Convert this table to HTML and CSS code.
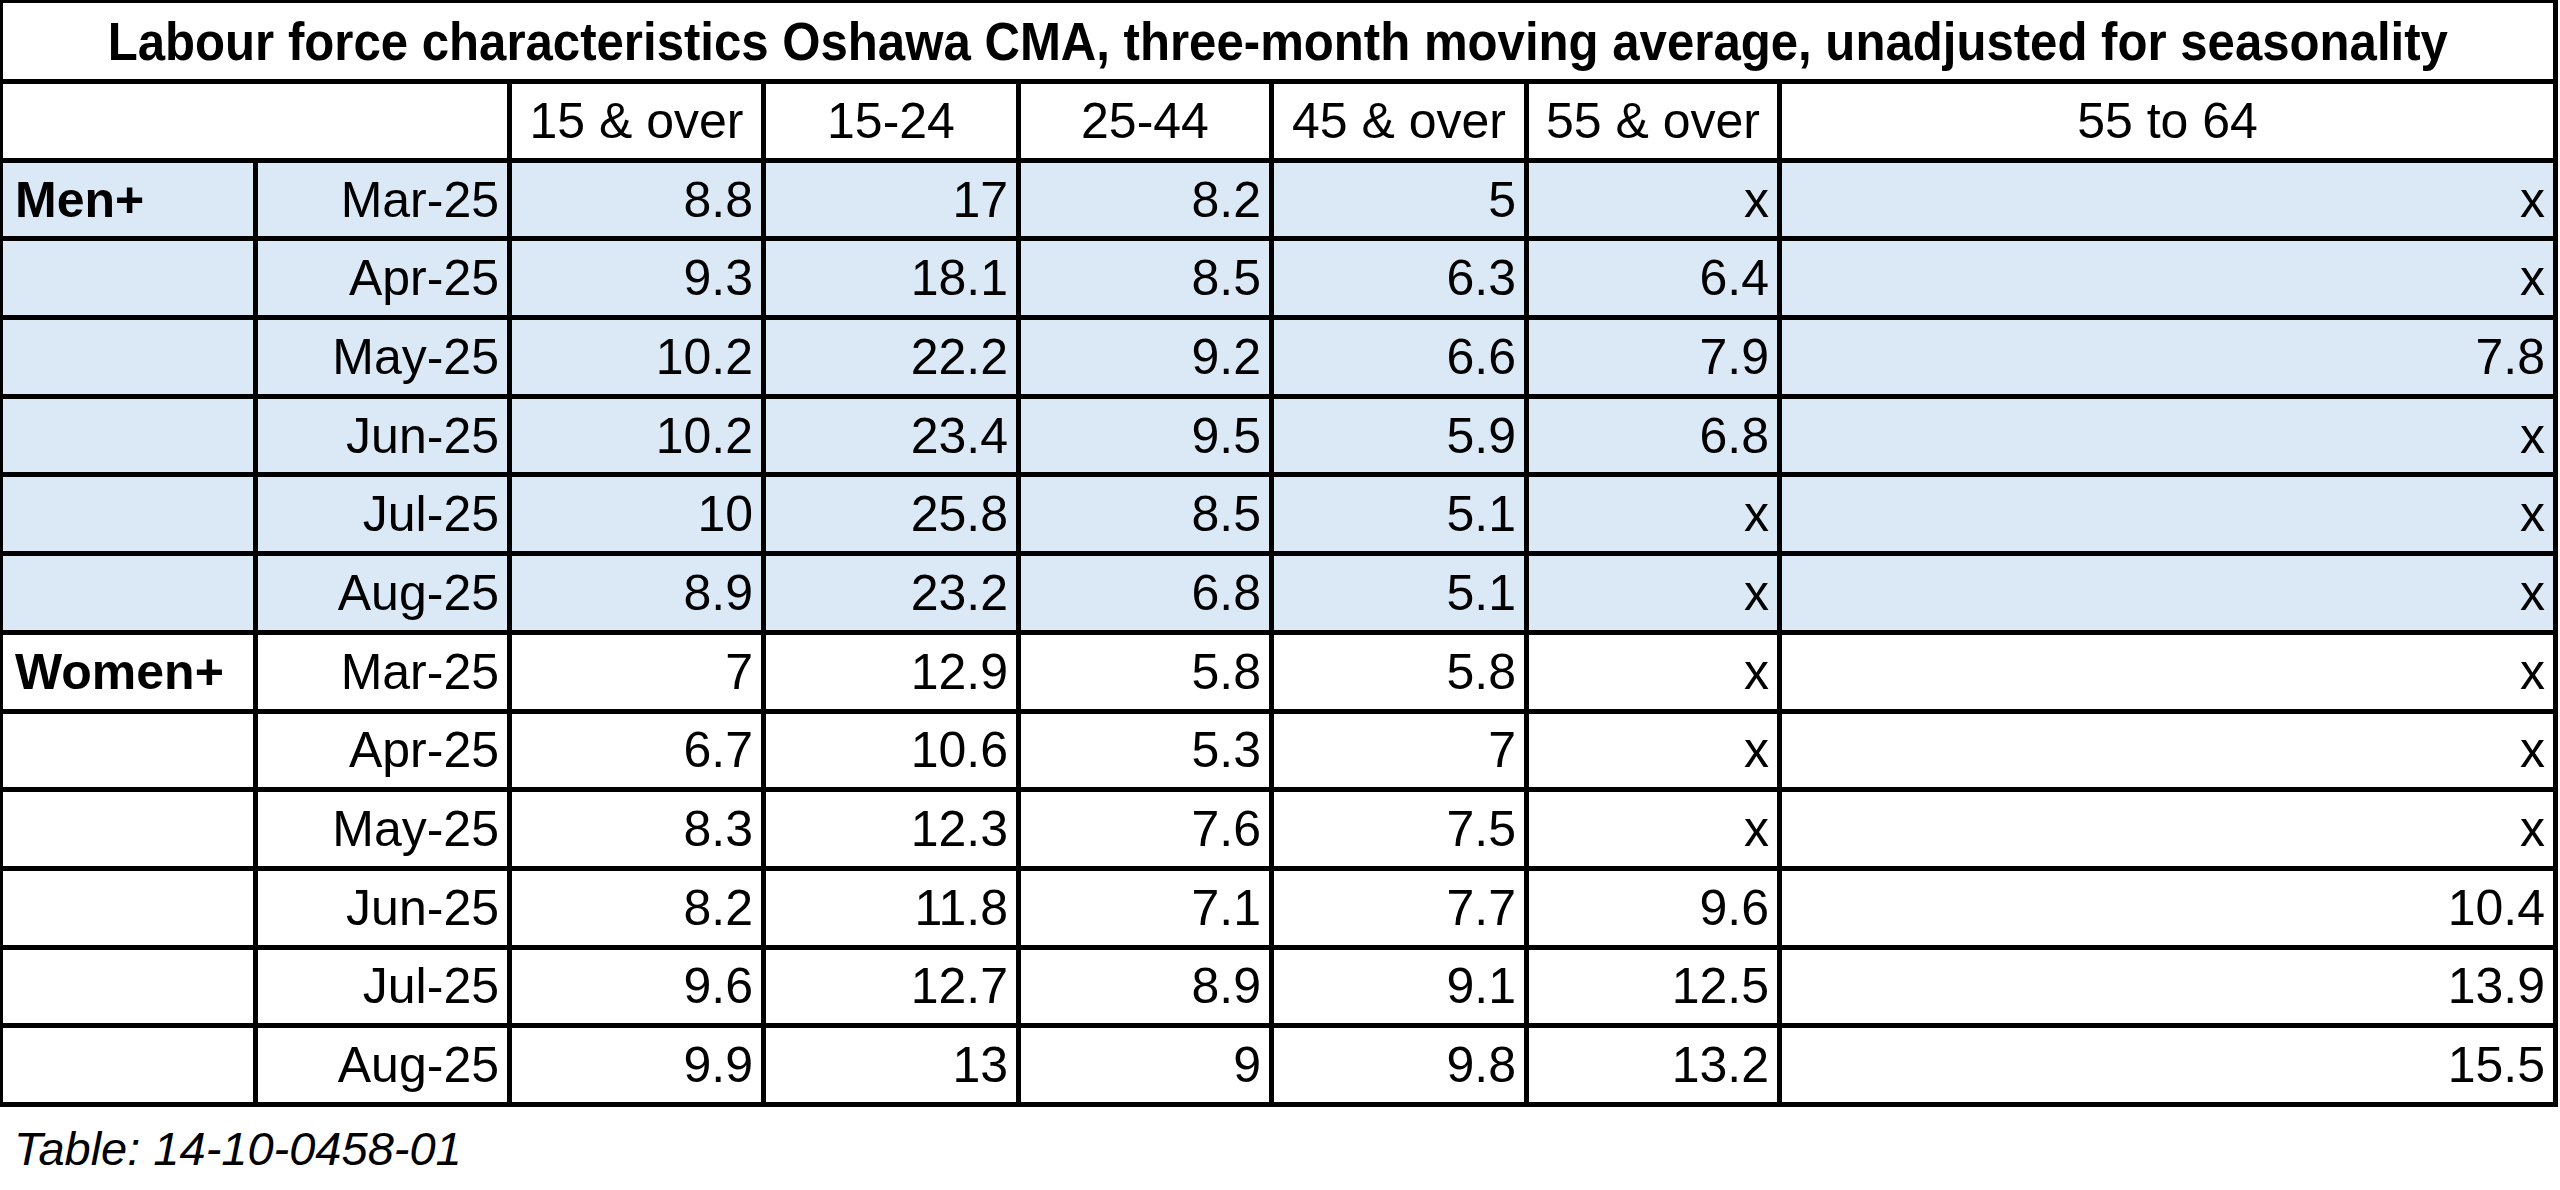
FILE: index.html
```html
<!DOCTYPE html>
<html lang="en">
<head>
<meta charset="utf-8">
<title>Labour force characteristics Oshawa CMA</title>
<link rel="stylesheet" href="styles.css">
</head>
<body>
<table class="lf">
  <colgroup>
    <col class="c1"><col class="c2"><col class="c3"><col class="c4"><col class="c5"><col class="c6"><col class="c7"><col class="c8">
  </colgroup>
  <tr class="title-row"><th colspan="8" class="title"><span class="title-text">Labour force characteristics Oshawa CMA, three-month moving average, unadjusted for seasonality</span></th></tr>
  <tr class="head-row"><th colspan="2"></th><th>15 &amp; over</th><th>15-24</th><th>25-44</th><th>45 &amp; over</th><th>55 &amp; over</th><th>55 to 64</th></tr>
  <tr class="shade"><td class="grp">Men+</td><td>Mar-25</td><td>8.8</td><td>17</td><td>8.2</td><td>5</td><td>x</td><td>x</td></tr>
  <tr class="shade"><td class="grp"></td><td>Apr-25</td><td>9.3</td><td>18.1</td><td>8.5</td><td>6.3</td><td>6.4</td><td>x</td></tr>
  <tr class="shade"><td class="grp"></td><td>May-25</td><td>10.2</td><td>22.2</td><td>9.2</td><td>6.6</td><td>7.9</td><td>7.8</td></tr>
  <tr class="shade"><td class="grp"></td><td>Jun-25</td><td>10.2</td><td>23.4</td><td>9.5</td><td>5.9</td><td>6.8</td><td>x</td></tr>
  <tr class="shade"><td class="grp"></td><td>Jul-25</td><td>10</td><td>25.8</td><td>8.5</td><td>5.1</td><td>x</td><td>x</td></tr>
  <tr class="shade"><td class="grp"></td><td>Aug-25</td><td>8.9</td><td>23.2</td><td>6.8</td><td>5.1</td><td>x</td><td>x</td></tr>
  <tr><td class="grp">Women+</td><td>Mar-25</td><td>7</td><td>12.9</td><td>5.8</td><td>5.8</td><td>x</td><td>x</td></tr>
  <tr><td class="grp"></td><td>Apr-25</td><td>6.7</td><td>10.6</td><td>5.3</td><td>7</td><td>x</td><td>x</td></tr>
  <tr><td class="grp"></td><td>May-25</td><td>8.3</td><td>12.3</td><td>7.6</td><td>7.5</td><td>x</td><td>x</td></tr>
  <tr><td class="grp"></td><td>Jun-25</td><td>8.2</td><td>11.8</td><td>7.1</td><td>7.7</td><td>9.6</td><td>10.4</td></tr>
  <tr><td class="grp"></td><td>Jul-25</td><td>9.6</td><td>12.7</td><td>8.9</td><td>9.1</td><td>12.5</td><td>13.9</td></tr>
  <tr><td class="grp"></td><td>Aug-25</td><td>9.9</td><td>13</td><td>9</td><td>9.8</td><td>13.2</td><td>15.5</td></tr>
</table>
<p class="source">Table: 14-10-0458-01</p>
</body>
</html>
```
FILE: styles.css
```css
html, body {
  margin: 0;
  padding: 0;
  background: #ffffff;
}

body {
  width: 2560px;
  color: #000000;
}

.lf {
  border-collapse: separate;
  border-spacing: 0;
  table-layout: fixed;
  width: 2558px;
  border-top: 3px solid #000;
  border-left: 3px solid #000;
  font-family: "Liberation Sans", Arial, sans-serif;
  font-size: 50px;
}

.c1 { width: 255px; }
.c2 { width: 254px; }
.c3 { width: 254px; }
.c4 { width: 255px; }
.c5 { width: 253px; }
.c6 { width: 255px; }
.c7 { width: 253px; }
.c8 { width: 776px; }

.lf th,
.lf td {
  box-sizing: border-box;
  border-right: 5px solid #000;
  border-bottom: 5px solid #000;
  padding: 0 8px 0 12px;
  white-space: nowrap;
  overflow: hidden;
  vertical-align: middle;
}

.lf tr {
  height: 78.7px;
}

.lf .title-row {
  height: 81px;
}

.lf .title {
  font-weight: 700;
  font-size: 54px;
  text-align: center;
  padding: 0;
  overflow: visible;
}

.title-text {
  display: inline-block;
  margin: 0 -40px;
  transform: scaleX(0.91);
}

.lf .head-row th {
  font-weight: 400;
  text-align: center;
  padding: 0;
}

.lf td {
  text-align: right;
}

.lf td.grp {
  text-align: left;
  font-weight: 700;
  padding-left: 12px;
}

.lf .shade td {
  background: #dbe9f7;
}

.source {
  margin: 18px 0 0 0;
  padding-left: 14px;
  font-family: "Liberation Sans", Arial, sans-serif;
  font-style: italic;
  font-size: 47px;
  line-height: 1;
}
```
